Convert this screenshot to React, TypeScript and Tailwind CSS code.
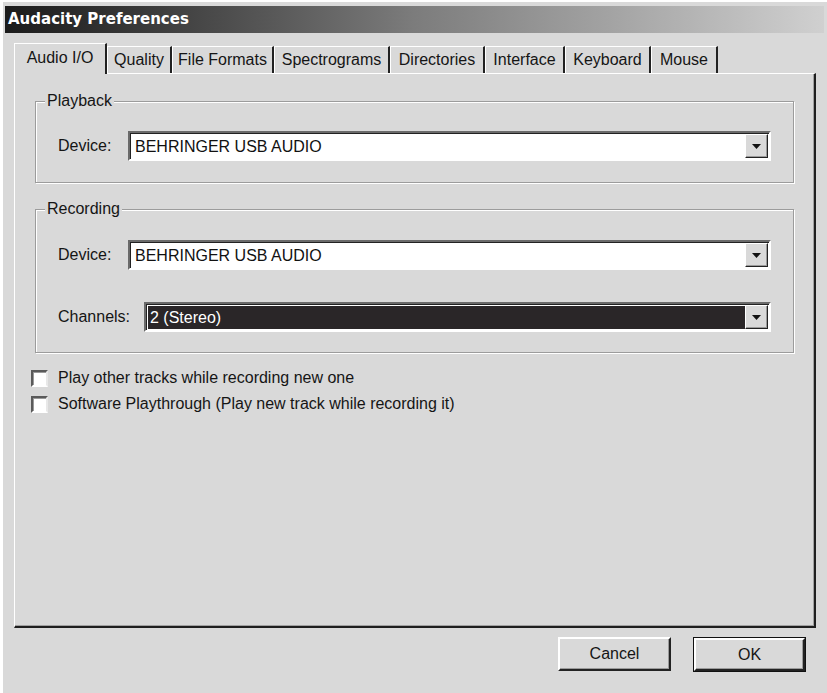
import React from "react";

const tabs = [
  { label: "Audio I/O", w: "w-[93px]" },
  { label: "Quality", w: "w-[65px]" },
  { label: "File Formats", w: "w-[102px]" },
  { label: "Spectrograms", w: "w-[116px]" },
  { label: "Directories", w: "w-[95px]" },
  { label: "Interface", w: "w-[80px]" },
  { label: "Keyboard", w: "w-[86px]" },
  { label: "Mouse", w: "w-[67px]" },
];

function Arrow() {
  return (
    <div className="flex h-full w-[23px] items-center justify-center border border-t-white border-l-white border-r-[#222] border-b-[#222] bg-[#d9d9d9] shadow-[inset_-1px_-1px_0_#9a9a9a]">
      <svg width="9" height="5" viewBox="0 0 9 5">
        <path d="M0 0h9L4.5 5z" fill="#111" />
      </svg>
    </div>
  );
}

function Combo({ value, selected }: { value: string; selected?: boolean }) {
  return (
    <div className="flex h-[30px] flex-1 items-stretch border-2 border-t-[#6a6a6a] border-l-[#6a6a6a] border-b-white border-r-white bg-white shadow-[inset_1px_1px_0_#222]">
      <div
        className={
          selected
            ? "ml-[2px] mt-[2px] mb-px flex flex-1 items-center bg-[#2a2628] pl-[2px] text-white"
            : "flex flex-1 items-center pl-[5px] pt-px text-[#111]"
        }
      >
        {value}
      </div>
      <div className="py-px pr-px">
        <Arrow />
      </div>
    </div>
  );
}

function Group({ title, children }: { title: string; children: React.ReactNode }) {
  return (
    <fieldset className="border border-[#9c9c9c] p-0 shadow-[1px_1px_0_#fff,inset_1px_1px_0_#fff]">
      <legend className="ml-[9px] bg-[#d9d9d9] px-[2px] leading-[18px]">{title}</legend>
      {children}
    </fieldset>
  );
}

function Check({ label }: { label: string }) {
  return (
    <div className="flex h-[26px] items-center">
      <div className="h-[17px] w-[17px] border-2 border-t-[#5a5a5a] border-l-[#5a5a5a] border-b-white border-r-[#e8e8e8] bg-white shadow-[inset_1px_1px_0_#999]" />
      <span className="ml-[10px]">{label}</span>
    </div>
  );
}

export default function App() {
  return (
    <div className="h-[693px] w-[827px] overflow-hidden border-t-2 border-l-[3px] border-white bg-[#d9d9d9] font-['Liberation_Sans',Arial,sans-serif] text-[16px] text-[#151515]">
      <div className="ml-[2px] mr-[3px] mt-[4px] flex h-[27px] items-center bg-linear-to-r from-[#1c1c1c] via-[#7c7c7c] to-[#d0d0d0] pl-[3px] font-['DejaVu_Sans',Verdana,sans-serif] text-[15px] font-bold text-white">
        Audacity Preferences
      </div>

      <div className="ml-[11px] mt-[10px] flex h-[30px] items-end">
        {tabs.map((t, i) =>
          i === 0 ? (
            <div
              key={t.label}
              className={`${t.w} relative z-10 -mb-px flex h-[31px] items-center justify-center border-t border-l border-r-2 border-t-white border-l-white border-r-[#222] bg-[#d9d9d9] pb-[2px]`}
            >
              {t.label}
            </div>
          ) : (
            <div
              key={t.label}
              className={`${t.w} flex h-[27px] items-center justify-center border-t border-l border-r-2 border-t-white border-l-white border-r-[#222] bg-[#d9d9d9]`}
            >
              {t.label}
            </div>
          )
        )}
      </div>

      <div className="ml-[11px] h-[555px] w-[802px] border-t border-l border-r-2 border-b-2 border-t-white border-l-white border-r-[#1e1e1e] border-b-[#1e1e1e] px-[20px] pt-[18px] shadow-[inset_-1px_-1px_0_#a0a0a0]">
        <Group title="Playback">
          <div className="flex items-center px-[22px] pb-[21px] pt-[21px]">
            <span className="w-[70px]">Device:</span>
            <Combo value="BEHRINGER USB AUDIO" />
          </div>
        </Group>

        <div className="mt-[17px]">
          <Group title="Recording">
            <div className="flex items-center px-[22px] pt-[22px]">
              <span className="w-[70px]">Device:</span>
              <Combo value="BEHRINGER USB AUDIO" />
            </div>
            <div className="flex items-center px-[22px] pb-[20px] pt-[32px]">
              <span className="w-[86px]">Channels:</span>
              <Combo value="2 (Stereo)" selected />
            </div>
          </Group>
        </div>

        <div className="-ml-[4px] mt-[12px]">
          <Check label="Play other tracks while recording new one" />
          <Check label="Software Playthrough (Play new track while recording it)" />
        </div>
      </div>

      <div className="mt-[9px] flex justify-end gap-[22px] pr-[21px]">
        <button className="h-[34px] w-[113px] border-2 border-t-white border-l-white border-r-[#222] border-b-[#222] bg-[#d9d9d9] shadow-[inset_-1px_-1px_0_#9a9a9a]">
          Cancel
        </button>
        <button className="h-[35px] w-[113px] border border-[#111] bg-[#d9d9d9]">
          <div className="flex h-full w-full items-center justify-center border-2 border-t-white border-l-white border-r-[#222] border-b-[#222] shadow-[inset_-1px_-1px_0_#9a9a9a]">
            OK
          </div>
        </button>
      </div>
    </div>
  );
}
